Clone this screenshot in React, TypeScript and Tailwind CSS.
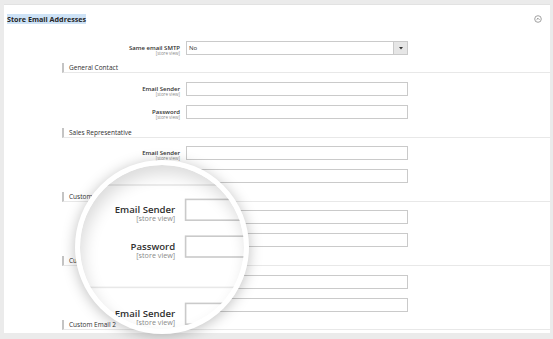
import React from "react";

function Label({ text }: { text: string }) {
  return (
    <div className="w-[176px] shrink-0 pt-[4px] text-right">
      <div className="text-[6px] leading-[6px] font-semibold text-[#303030] whitespace-nowrap">{text}</div>
      <div className="text-[4.5px] leading-[5px] text-[#8a8a8a] whitespace-nowrap">[store view]</div>
    </div>
  );
}

function Field({ text, cls }: { text: string; cls: string }) {
  return (
    <div className={"flex h-[14px] " + cls}>
      <Label text={text} />
      <div className="ml-[6px] w-[222px] h-[14px] shrink-0 border border-[#cacaca] bg-white" />
    </div>
  );
}

function Heading({ text, cls }: { text: string; cls: string }) {
  return (
    <div
      className={
        "ml-[58px] h-[10px] border-l-2 border-b border-l-[#c4c4c4] border-b-[#e8e8e8] pl-[5px] text-[6.5px] leading-[9px] text-[#303030] whitespace-nowrap " +
        cls
      }
    >
      {text}
    </div>
  );
}

function Page() {
  return (
    <div className="w-[553px] h-[339px] bg-[#ebebeb] pt-[4px] pl-[4px] font-['Open_Sans',sans-serif]">
      <div className="w-[546px] h-[329px] bg-white border-t border-t-[#e2e2e2] pt-[9px] flex flex-col">
        <div className="flex items-center justify-between pl-[3px] pr-[8px] h-[10px]">
          <span className="inline-block bg-[#cde2f6] h-[10px] leading-[10px] text-[7.2px] font-bold text-[#262626] whitespace-nowrap">
            Store Email Addresses
          </span>
          <svg width="8" height="8" viewBox="0 0 8 8">
            <circle cx="4" cy="4" r="3.3" fill="none" stroke="#8a8a8a" strokeWidth="0.8" />
            <path d="M2.6 4.7 L4 3.3 L5.4 4.7" fill="none" stroke="#6a6a6a" strokeWidth="0.8" />
          </svg>
        </div>

        <div className="flex h-[14px] mt-[17px]">
          <Label text="Same email SMTP" />
          <div className="ml-[6px] w-[222px] h-[14px] shrink-0 border border-[#cacaca] bg-white flex items-stretch">
            <div className="flex-1 pl-[2px] text-[6px] leading-[12px] text-[#303030]">No</div>
            <div className="w-[14px] border-l border-l-[#cacaca] bg-[#e6e6e6] flex items-center justify-center">
              <svg width="4" height="3" viewBox="0 0 4 3">
                <path d="M0 0 L4 0 L2 2.5 Z" fill="#333" />
              </svg>
            </div>
          </div>
        </div>

        <Heading text="General Contact" cls="mt-[8px]" />
        <Field text="Email Sender" cls="mt-[9px]" />
        <Field text="Password" cls="mt-[9px]" />

        <Heading text="Sales Representative" cls="mt-[9px]" />
        <Field text="Email Sender" cls="mt-[8px]" />
        <Field text="Password" cls="mt-[9px]" />

        <Heading text="Customer Support" cls="mt-[9px]" />
        <Field text="Email Sender" cls="mt-[8px]" />
        <Field text="Password" cls="mt-[9px]" />

        <Heading text="Custom Email 1" cls="mt-[9px]" />
        <Field text="Email Sender" cls="mt-[9px]" />
        <Field text="Password" cls="mt-[9px]" />

        <Heading text="Custom Email 2" cls="mt-[8px]" />
      </div>
    </div>
  );
}

export default function App() {
  return (
    <div className="relative w-[553px] h-[339px] overflow-hidden">
      <Page />
      <div className="absolute left-[75px] top-[160px] w-[174px] h-[174px] rounded-full border-[5px] border-white overflow-hidden bg-white shadow-[0_2px_14px_rgba(0,0,0,0.25)]">
        <div className="absolute left-[-80px] top-[-165px] w-[553px] h-[339px] origin-[188px_229px] scale-[1.6]">
          <Page />
        </div>
        <div className="absolute inset-0 rounded-full pointer-events-none shadow-[inset_3px_9px_16px_rgba(0,0,0,0.14)]" />
      </div>
    </div>
  );
}
